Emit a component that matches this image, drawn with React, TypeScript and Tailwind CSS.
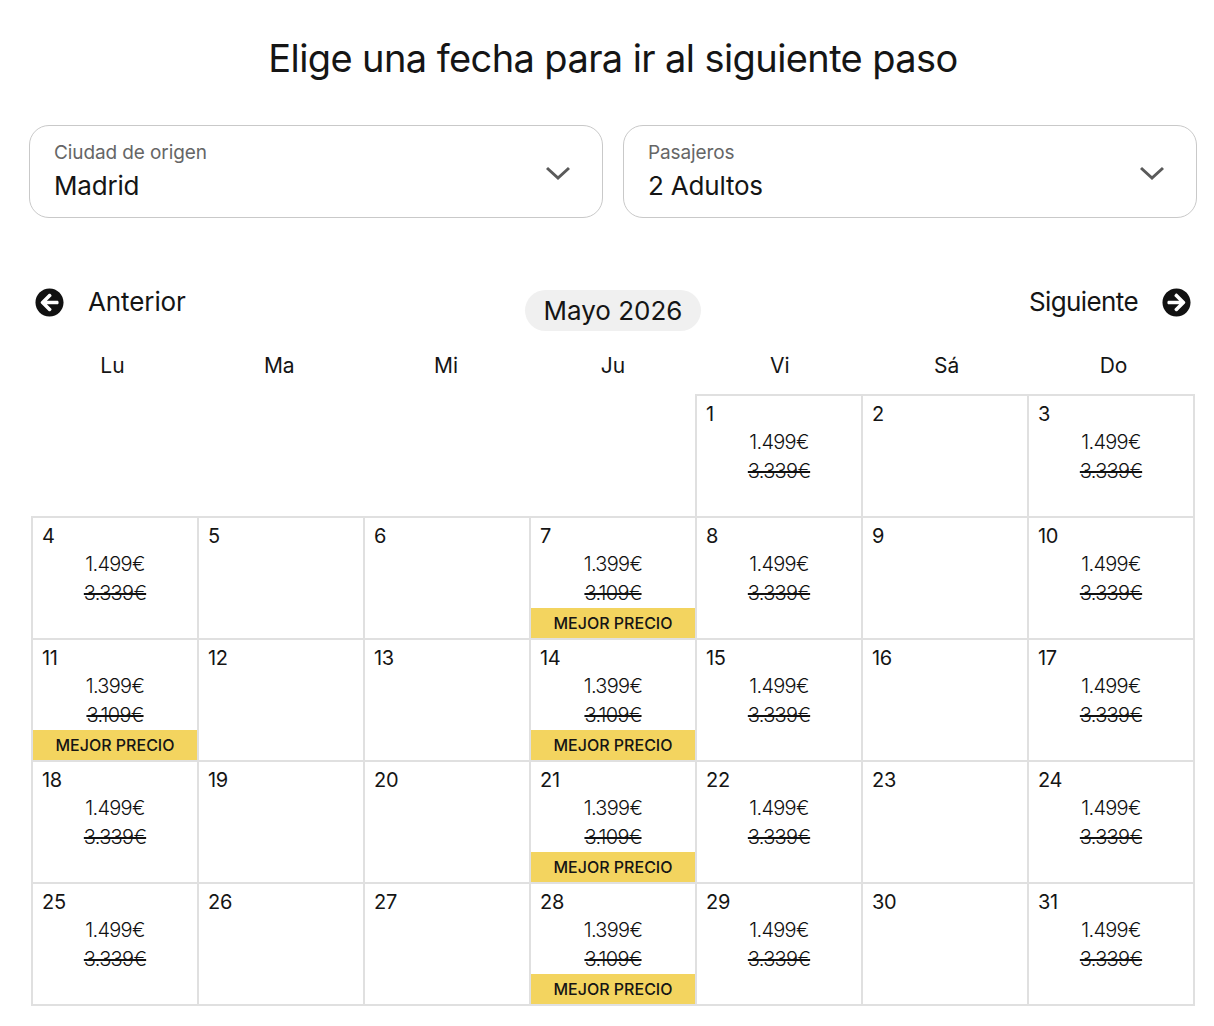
import React from 'react';
import { FaArrowCircleLeft, FaArrowCircleRight } from 'react-icons/fa';

interface DayCell {
  day: number;
  price?: string;
  oldPrice?: string;
  best?: boolean;
}

const weekDays = ['Lu', 'Ma', 'Mi', 'Ju', 'Vi', 'Sá', 'Do'];

const normal = (day: number): DayCell => ({ day, price: '1.499€', oldPrice: '3.339€' });
const best = (day: number): DayCell => ({ day, price: '1.399€', oldPrice: '3.109€', best: true });
const empty = (day: number): DayCell => ({ day });

const weeks: (DayCell | null)[][] = [
  [null, null, null, null, normal(1), empty(2), normal(3)],
  [normal(4), empty(5), empty(6), best(7), normal(8), empty(9), normal(10)],
  [best(11), empty(12), empty(13), best(14), normal(15), empty(16), normal(17)],
  [normal(18), empty(19), empty(20), best(21), normal(22), empty(23), normal(24)],
  [normal(25), empty(26), empty(27), best(28), normal(29), empty(30), normal(31)],
];

function SelectBox({ label, value }: { label: string; value: string }) {
  return (
    <div className="flex-1 h-[93px] border border-[#c9c9c9] rounded-[20px] pl-[24px] pr-[32px] flex items-center justify-between">
      <div>
        <div className="text-[19px] leading-[28px] tracking-[-0.1px] text-[#666666]">{label}</div>
        <div className="text-[26px] leading-[38px] tracking-[-0.2px] text-[#151515]">{value}</div>
      </div>
      <svg className="w-[24px] h-[24px] mt-[4px] text-[#5a5a5a]" viewBox="0 0 24 24" fill="none" stroke="currentColor" strokeWidth={3}>
        <path d="M1 6l11 10L23 6" />
      </svg>
    </div>
  );
}

function Day({ cell }: { cell: DayCell }) {
  return (
    <div className="h-[120px] flex flex-col">
      <div className="pl-[9px] pt-[4px] text-[20px] leading-[28px] tracking-[-0.3px] h-[32px]">{cell.day}</div>
      {cell.price && (
        <>
          <div className="text-center text-[20px] leading-[29px] tracking-[-0.7px] font-light text-[#111111]">{cell.price}</div>
          <div className="text-center text-[20px] leading-[29px] tracking-[-0.7px] font-light text-[#111111] line-through">{cell.oldPrice}</div>
        </>
      )}
      {cell.best && (
        <div className="mt-auto h-[30px] bg-[#f3d45f] flex items-center justify-center text-[16px] font-medium text-[#151515]">
          MEJOR PRECIO
        </div>
      )}
    </div>
  );
}

export default function App(): JSX.Element {
  return (
    <div className="w-[1214px] h-[1026px] bg-white text-[#151515] overflow-hidden font-['Inter',sans-serif]">
      <div className="w-[1168px] ml-[29px]">
        <h1 className="pt-[33px] h-[125px] text-center text-[38px] leading-[50px] tracking-[-0.6px] font-normal">
          Elige una fecha para ir al siguiente paso
        </h1>

        <div className="flex gap-[20px]">
          <SelectBox label="Ciudad de origen" value="Madrid" />
          <SelectBox label="Pasajeros" value="2 Adultos" />
        </div>

        {/* Month navigation */}
        <div className="mt-[69px] h-[44px] flex items-start px-[6px]">
          <div className="flex-1 flex items-center gap-[24px] text-[26px] leading-[30px] tracking-[-0.1px]">
            <FaArrowCircleLeft className="w-[29px] h-[29px] text-[#111111]" />
            <span>Anterior</span>
          </div>
          <div className="mt-[3px] h-[41px] px-[19px] rounded-full bg-[#f0f0f0] text-[26px] leading-[41px]">Mayo 2026</div>
          <div className="flex-1 flex items-center justify-end gap-[24px] text-[26px] leading-[30px] tracking-[-0.6px]">
            <span>Siguiente</span>
            <FaArrowCircleRight className="w-[29px] h-[29px] text-[#111111]" />
          </div>
        </div>

        <div className="grid grid-cols-7 mt-[20px] h-[43px] text-center text-[21px] leading-[30px]">
          {weekDays.map((d) => (
            <div key={d}>{d}</div>
          ))}
        </div>

        <table className="ml-[2px] w-[1164px] table-fixed border-collapse">
          <tbody>
            {weeks.map((week, i) => (
              <tr key={i} className="h-[122px]">
                {week.map((cell, j) => (
                  <td key={j} className={cell ? 'border-2 border-[#e0e0e0] p-0 align-top' : 'p-0'}>
                    {cell && <Day cell={cell} />}
                  </td>
                ))}
              </tr>
            ))}
          </tbody>
        </table>
      </div>
    </div>
  );
}
